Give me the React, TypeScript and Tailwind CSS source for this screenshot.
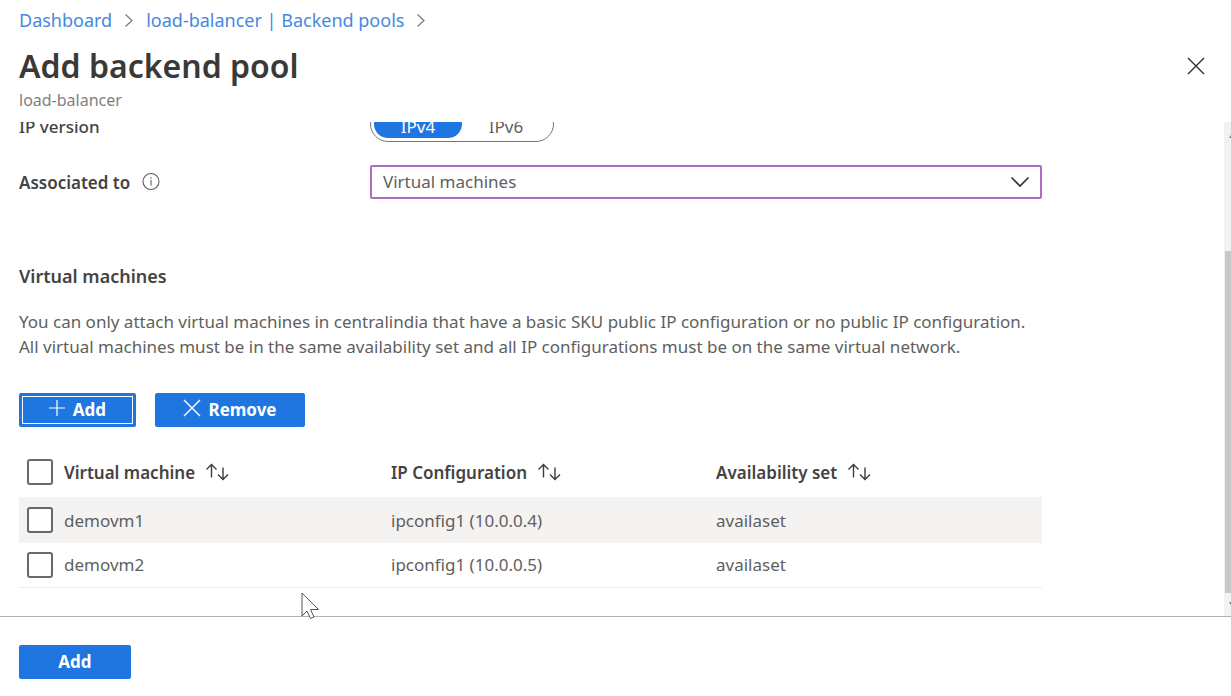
import { useState } from "react";

const machines = [
  { name: "demovm1", ip: "ipconfig1 (10.0.0.4)", set: "availaset" },
  { name: "demovm2", ip: "ipconfig1 (10.0.0.5)", set: "availaset" },
];

const columns = ["Virtual machine", "IP Configuration", "Availability set"];

function Crumb() {
  return (
    <svg className="h-4 w-3 shrink-0" viewBox="0 0 12 16" fill="none" stroke="#7a7a7a" strokeWidth="1.2" aria-hidden="true">
      <path d="M2.500 1.500l6.500 6-6.500 6" />
    </svg>
  );
}

function Cross({ className }: { className: string }) {
  return (
    <svg className={className} viewBox="0 0 18 18" fill="none" stroke="currentColor" strokeWidth="1.4" aria-hidden="true">
      <path d="M1 1l16 16M17 1L1 17" />
    </svg>
  );
}

function SortArrows() {
  return (
    <svg className="h-5 w-6 shrink-0" viewBox="0 0 24 20" fill="none" stroke="#3c3c3c" strokeWidth="1.4" aria-hidden="true">
      <path d="M6.500 15.500V2.500M1.500 7.500l5-5 5 5" />
      <path d="M18 5.500v12M13 12.500l5 5 5-5" />
    </svg>
  );
}

function Check({ label }: { label: string }) {
  return (
    <input
      type="checkbox"
      aria-label={label}
      className="block size-[26px] appearance-none rounded-[3px] border-2 border-[#6a6866] bg-white checked:bg-[#1f76e0]"
    />
  );
}

export default function App() {
  const [version, setVersion] = useState("IPv4");

  return (
    <div className="flex h-screen flex-col overflow-hidden bg-white font-['Noto_Sans','Open_Sans',sans-serif] text-[17px] leading-[25px] text-[#605f5e]">
      <header className="shrink-0 pl-[19px] pr-[26px]">
        <nav aria-label="Breadcrumb" className="flex items-center gap-[11px] pt-2 text-[18px] text-[#4489e0]">
          <a href="#dashboard">Dashboard</a>
          <Crumb />
          <a href="#pools">load-balancer | Backend pools</a>
          <Crumb />
        </nav>
        <div className="flex h-[66px] items-center justify-between">
          <h1 className="text-[32px] font-semibold leading-10 text-[#3a3938]">Add backend pool</h1>
          <button type="button" aria-label="Close" className="text-[#323130]">
            <Cross className="size-[18px]" />
          </button>
        </div>
        <p className="-mt-[11px] pb-[10px] text-[16px] leading-6 text-[#7f7e7d]">load-balancer</p>
      </header>

      <div className="flex min-h-0 flex-1">
        <main className="min-w-0 flex-1 overflow-hidden pl-[19px]">
          <div className="-mt-4 w-full max-w-[1023px]">
            <div className="flex h-9 items-center" role="radiogroup" aria-labelledby="ip-version">
              <span id="ip-version" className="w-[351px] shrink-0 pb-1 pt-2 font-medium text-[#444342]">IP version</span>
              <div className="flex h-9 w-[184px] rounded-full border border-[#797775] p-[3px]">
                {["IPv4", "IPv6"].map((v) => (
                  <label
                    key={v}
                    className="flex flex-1 cursor-pointer items-center justify-center rounded-full pt-1 has-checked:bg-[#1f76e0] has-checked:text-white"
                  >
                    <input type="radio" name="version" className="sr-only" checked={version === v} onChange={() => setVersion(v)} />
                    {v}
                  </label>
                ))}
              </div>
            </div>

            <div className="mt-[23px] flex items-center">
              <div className="flex w-[351px] shrink-0 items-center gap-3">
                <label htmlFor="associated" className="font-semibold text-[#444342]">Associated to</label>
                <svg className="size-[18px]" viewBox="0 0 18 18" fill="none" stroke="#605e5c" strokeWidth="1.1" aria-hidden="true">
                  <circle cx="9" cy="8.500" r="8" />
                  <path d="M9 7v5.500M9 4.300v1.400" />
                </svg>
              </div>
              <div className="relative flex-1">
                <select
                  id="associated"
                  className="block h-[34px] w-full appearance-none rounded-[2px] border-2 border-[#b06cc0] bg-white px-[11px] pb-px leading-[25px] text-[#605f5e]"
                >
                  <option>Virtual machines</option>
                </select>
                <svg className="pointer-events-none absolute right-3 top-[11px] h-3 w-5" viewBox="0 0 20 12" fill="none" stroke="#323130" strokeWidth="1.6" aria-hidden="true">
                  <path d="M1.500 1.500l8.500 8.500 8.500-8.500" />
                </svg>
              </div>
            </div>

            <h2 className="mt-[65px] text-[18px] font-semibold text-[#444342]">Virtual machines</h2>
            <p className="mt-5">
              You can only attach virtual machines in centralindia that have a basic SKU public IP configuration or no public IP configuration.
              <br />
              All virtual machines must be in the same availability set and all IP configurations must be on the same virtual network.
            </p>

            <div className="mt-[34px] flex gap-[19px]">
              <button type="button" className="h-[34px] w-[117px] rounded-[2px] bg-[#1f76e0] p-[3px] font-bold text-white">
                <span className="flex h-full items-center justify-center gap-2 border border-white pb-[2px]">
                  <svg className="mb-[3px] size-4" viewBox="0 0 16 16" fill="none" stroke="currentColor" strokeWidth="1.200" aria-hidden="true">
                    <path d="M8 0v16M0 8h16" />
                  </svg>
                  Add
                </span>
              </button>
              <button type="button" className="flex h-[34px] w-[150px] items-center justify-center gap-[7px] rounded-[2px] bg-[#1f76e0] pb-[2px] font-bold text-white">
                <Cross className="mb-[3px] size-[18px]" />
                Remove
              </button>
            </div>

            <table className="mt-5 w-full table-fixed border-collapse text-left">
              <colgroup>
                <col className="w-[45px]" />
                <col className="w-[327px]" />
                <col className="w-[325px]" />
                <col />
              </colgroup>
              <thead>
                <tr className="h-[50px]">
                  <th className="pl-2">
                    <Check label="Select all virtual machines" />
                  </th>
                  {columns.map((c) => (
                    <th key={c} className="font-semibold text-[#444342]">
                      <button type="button" className="flex items-center gap-[10px]">
                        {c}
                        <SortArrows />
                      </button>
                    </th>
                  ))}
                </tr>
              </thead>
              <tbody>
                {machines.map((m) => (
                  <tr key={m.name} className="odd:h-[46px] odd:bg-[#f4f3f2] even:h-11 even:border-b even:border-[#f0efee]">
                    <td className="pl-2">
                      <Check label={`Select ${m.name}`} />
                    </td>
                    <td>{m.name}</td>
                    <td>{m.ip}</td>
                    <td>{m.set}</td>
                  </tr>
                ))}
              </tbody>
            </table>
          </div>
        </main>
        <div className="flex w-[7px] shrink-0 flex-col items-end bg-[#f2f2f2] pb-[11px] pt-[13px]" aria-hidden="true">
          <svg className="h-1 w-[2px]" viewBox="0 0 2 4" fill="#808080">
            <path d="M2 0v3H0z" />
          </svg>
          <div className="mb-2 mt-28 w-[6px] flex-1 bg-[#c8c8c8]" />
          <svg className="h-1 w-[2px]" viewBox="0 0 2 4" fill="#808080">
            <path d="M0 1h2v3z" />
          </svg>
        </div>
      </div>

      <footer className="shrink-0 border-t border-[#b3b0ad] pb-[17px] pl-[19px] pt-7">
        <button type="button" className="block h-[34px] w-28 rounded-[2px] bg-[#1f76e0] pb-px font-bold text-white">Add</button>
      </footer>

      <svg className="pointer-events-none absolute left-[301px] top-[592px] h-7 w-5" viewBox="0 0 20 28" fill="#fff" stroke="#555" strokeWidth="1" aria-hidden="true">
        <path d="M1 1v23l5-5 3.500 7.500 3.500-1.500-3.500-7.500h8z" />
      </svg>
    </div>
  );
}
